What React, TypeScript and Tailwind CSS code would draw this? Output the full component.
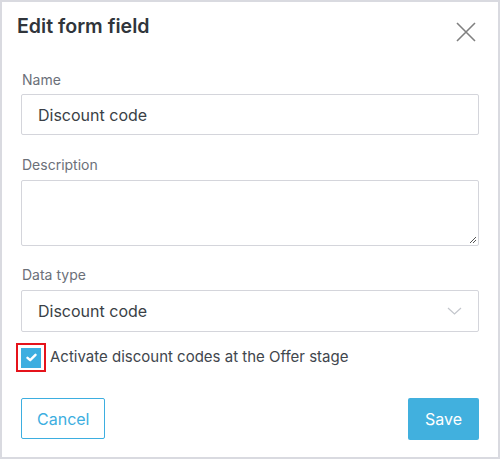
import React from "react";

export default function App() {
  return (
    <div className="w-[501px] h-[460px] bg-white" style={{ fontFamily: "Inter, 'Noto Sans', sans-serif" }}>
      <div className="w-[500px] h-[459px] border-2 border-[#d9dae0] bg-white flex flex-col">
        <div className="flex items-start justify-between pl-[15px] pr-[22px] pt-[10px]">
          <h1 className="text-[19.6px] leading-[28px] font-semibold text-[#30353b]">Edit form field</h1>
          <button className="mt-[10px] w-[20px] h-[20px] flex items-center justify-center">
            <svg width="20" height="20" viewBox="0 0 20 20" fill="none" stroke="#808080" strokeWidth="1.6">
              <path d="M1 1L19 19M19 1L1 19" />
            </svg>
          </button>
        </div>

        <div className="px-[19px] flex flex-col">
          <label className="mt-[28px] text-[14px] leading-[20px] text-[#6b7079] pl-[1px]">Name</label>
          <div className="mt-[4px] h-[41px] border border-[#d4d5db] rounded-[2px] flex items-center px-[16px] text-[16px] text-[#3a3f46]">
            Discount code
          </div>

          <label className="mt-[20px] text-[14px] leading-[20px] text-[#6b7079] pl-[1px]">Description</label>
          <div className="mt-[5px] h-[66px] border border-[#d4d5db] rounded-[2px] relative">
            <svg className="absolute right-[1px] bottom-[1px]" width="9" height="9" viewBox="0 0 9 9" stroke="#555" strokeWidth="1">
              <path d="M8 2L2 8M8 5L5 8" />
            </svg>
          </div>

          <label className="mt-[19px] text-[14px] leading-[20px] text-[#6b7079] pl-[1px]">Data type</label>
          <div className="mt-[5px] h-[42px] border border-[#d4d5db] rounded-[2px] flex items-center justify-between px-[16px] text-[16px] text-[#3a3f46]">
            <span>Discount code</span>
            <svg width="15" height="8" viewBox="0 0 15 8" fill="none" stroke="#c3c6cc" strokeWidth="1.2">
              <path d="M1 1L7.5 7L14 1" />
            </svg>
          </div>

          <div className="mt-[11px] flex items-center">
            <div className="ml-[-5px] w-[30px] h-[29px] border-2 border-[#e5131b] flex items-center justify-center">
              <div className="w-[20px] h-[20px] bg-[#3daee0] flex items-center justify-center">
                <svg width="11" height="9" viewBox="0 0 11 9" fill="none" stroke="#fff" strokeWidth="2.4" strokeLinecap="round" strokeLinejoin="round">
                  <path d="M1.5 4.8L4.2 7.2L9.5 1.8" />
                </svg>
              </div>
            </div>
            <span className="ml-[4px] text-[15px] text-[#41464d]">Activate discount codes at the Offer stage</span>
          </div>

          <div className="mt-[26px] flex items-start justify-between">
            <button className="h-[41px] px-[15px] border border-[#3daee0] rounded-[2px] text-[16px] text-[#3daee0]">Cancel</button>
            <button className="h-[42px] px-[17px] bg-[#41b0de] rounded-[2px] text-[16px] text-white">Save</button>
          </div>
        </div>
      </div>
    </div>
  );
}
